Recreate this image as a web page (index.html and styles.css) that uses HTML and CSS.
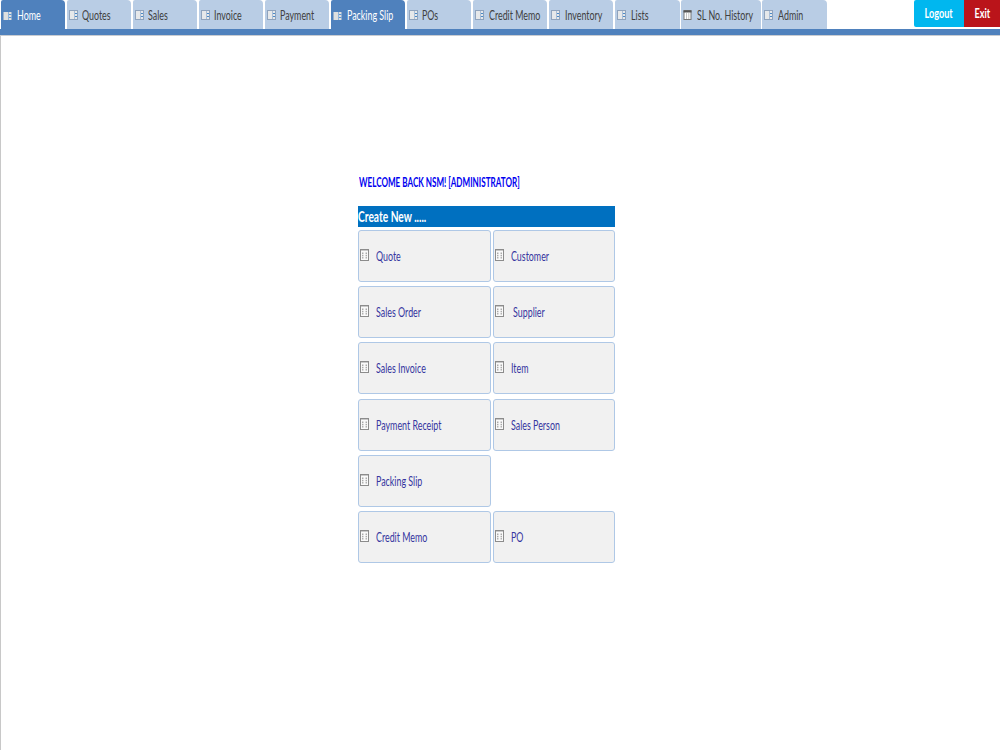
FILE: index.html
```
<!DOCTYPE html>
<html lang="en">
<head>
<meta charset="utf-8">
<title>Home</title>
<link rel="stylesheet" href="styles.css">
</head>
<body>
<svg class="defs" width="0" height="0">
  <symbol id="form" viewBox="0 0 9 10">
    <rect x=".5" y=".5" width="8" height="9" fill="#e6e8ea" stroke="#8fa3bd"/>
    <path d="M5.500 1v8" stroke="#a9bdd6"/>
    <path d="M6 3.500h2M6 6.500h2" stroke="#4a8ac8"/>
  </symbol>
  <symbol id="form-active" viewBox="0 0 9 10">
    <rect x=".5" y="1" width="8" height="8" fill="#dedfdf"/>
    <path d="M5.500 1v8" stroke="#8fb2da"/>
    <path d="M6 3.500h2.500M6 6.500h2.500" stroke="#5b96d4"/>
  </symbol>
  <symbol id="table" viewBox="0 0 9 10">
    <rect x="1" y=".5" width="7" height="9" fill="#fff" stroke="#777"/>
    <path d="M.5 1.500h8" stroke="#555" stroke-width="2"/>
    <path d="M3.500 3v6M5.800 3v6" stroke="#aaa" stroke-width=".7"/>
  </symbol>
  <symbol id="sheet" viewBox="0 0 9 12">
    <rect x=".5" y=".5" width="8" height="11" fill="#fafafa" stroke="#8c8c8c"/>
    <path d="M1 1.500h7" stroke="#c9c9c9"/>
    <path d="M2.500 3.500v6M6.500 3.500v6" stroke="#aaa" stroke-dasharray="1.500 .8"/>
    <path d="M3.500 3.500v6M5.500 3.500v6" stroke="#d6d6d6" stroke-dasharray="1.500 .8"/>
  </symbol>
</svg>
<header class="topbar">
  <nav class="tabs">
    <a class="tab home active"><svg class="ico"><use href="#form-active"/></svg><span class="label">Home</span></a>
    <a class="tab"><svg class="ico"><use href="#form"/></svg><span class="label">Quotes</span></a>
    <a class="tab"><svg class="ico"><use href="#form"/></svg><span class="label">Sales</span></a>
    <a class="tab"><svg class="ico"><use href="#form"/></svg><span class="label">Invoice</span></a>
    <a class="tab"><svg class="ico"><use href="#form"/></svg><span class="label">Payment</span></a>
    <a class="tab wide active"><svg class="ico"><use href="#form-active"/></svg><span class="label">Packing Slip</span></a>
    <a class="tab"><svg class="ico"><use href="#form"/></svg><span class="label">POs</span></a>
    <a class="tab wide"><svg class="ico"><use href="#form"/></svg><span class="label">Credit Memo</span></a>
    <a class="tab"><svg class="ico"><use href="#form"/></svg><span class="label">Inventory</span></a>
    <a class="tab"><svg class="ico"><use href="#form"/></svg><span class="label">Lists</span></a>
    <a class="tab wider"><svg class="ico"><use href="#table"/></svg><span class="label">SL No. History</span></a>
    <a class="tab"><svg class="ico"><use href="#form"/></svg><span class="label">Admin</span></a>
  </nav>
  <div class="session">
    <a class="logout"><span>Logout</span></a>
    <a class="exit"><span>Exit</span></a>
  </div>
</header>
<main class="page">
  <section class="panel">
    <h1 class="welcome"><span>WELCOME BACK NSM! [ADMINISTRATOR]</span></h1>
    <h2 class="title"><span>Create New .....</span></h2>
    <div class="grid">
      <a class="btn"><svg class="sheet"><use href="#sheet"/></svg><span class="label">Quote</span></a>
      <a class="btn"><svg class="sheet"><use href="#sheet"/></svg><span class="label">Customer</span></a>
      <a class="btn"><svg class="sheet"><use href="#sheet"/></svg><span class="label">Sales Order</span></a>
      <a class="btn supplier"><svg class="sheet"><use href="#sheet"/></svg><span class="label">Supplier</span></a>
      <a class="btn"><svg class="sheet"><use href="#sheet"/></svg><span class="label">Sales Invoice</span></a>
      <a class="btn"><svg class="sheet"><use href="#sheet"/></svg><span class="label">Item</span></a>
      <a class="btn"><svg class="sheet"><use href="#sheet"/></svg><span class="label">Payment Receipt</span></a>
      <a class="btn"><svg class="sheet"><use href="#sheet"/></svg><span class="label">Sales Person</span></a>
      <a class="btn"><svg class="sheet"><use href="#sheet"/></svg><span class="label">Packing Slip</span></a>
      <a class="btn first"><svg class="sheet"><use href="#sheet"/></svg><span class="label">Credit Memo</span></a>
      <a class="btn"><svg class="sheet"><use href="#sheet"/></svg><span class="label">PO</span></a>
    </div>
  </section>
</main>
</body>
</html>
```
FILE: styles.css
```
* { box-sizing: border-box; }
body {
  margin: 0;
  height: 750px;
  overflow: hidden;
  display: flex;
  flex-direction: column;
  background: #fff;
  font-family: Lato, "Liberation Sans", sans-serif;
  font-size: 12px;
}
.defs { position: absolute; }
span {
  display: block;
  flex: none;
  white-space: nowrap;
  transform: scale(.74, 1.15);
  transform-origin: 0 50%;
}
.topbar {
  flex: none;
  height: 35px;
  display: flex;
  justify-content: space-between;
  border-bottom: 6px solid #4f81bd;
  box-shadow: 0 1px 0 #c9ccd1;
}
.tabs { display: flex; gap: 1.700px; padding-left: 1px; }
.tab {
  width: 64.400px;
  height: 29px;
  display: flex;
  align-items: center;
  padding: 1px 0 0 2px;
  background: #b9cde5;
  border-radius: 2px 4px 0 0;
  color: #404040;
}
.tab.home { width: 64px; }
.tab.wide { width: 74.300px; }
.tab.wider { width: 79.400px; }
.tab.active { height: 30px; background: #4f81bd; color: #fff; }
.tab .label { margin-bottom: 2px; }
.ico { flex: none; width: 9px; height: 10px; margin-right: 4.500px; }
.session { display: flex; }
.session a {
  height: 27px;
  display: flex;
  align-items: center;
  justify-content: center;
  color: #fff;
  font-weight: 700;
  padding-bottom: 3px;
}
.session span { transform: scale(.76, 1.150); transform-origin: 50% 50%; }
.logout { width: 50px; background: #00b7ef; border-radius: 2px 0 0 2px; }
.exit { width: 36px; background: #ba141a; }
.page {
  flex: 1;
  margin-top: 1px;
  border-left: 1px solid #c8c8c8;
  padding: 138px 0 0 357px;
}
.panel { width: 257px; }
.welcome {
  margin: 0;
  height: 32px;
  padding-left: 1px;
  font-size: 11.500px;
  line-height: 15px;
  color: #0000f0;
}
.welcome span { transform: scale(.704, 1.150); }
.title {
  margin: 0 0 3px;
  height: 21px;
  background: #0070c0;
  color: #fff;
  font-size: 13px;
  line-height: 21px;
}
.title span { transform: scale(.785, 1.120); }
.grid {
  display: grid;
  grid-template-columns: 133px 122px;
  grid-auto-rows: 52px;
  gap: 4.200px 2px;
}
.btn {
  display: flex;
  align-items: center;
  padding-left: 1px;
  background: #f1f1f1;
  border: 1px solid #afc8e6;
  border-radius: 3px;
  color: #3535a0;
}
.btn.first { grid-column: 1; }
.btn .label { margin-bottom: 1px; }
.sheet { flex: none; width: 9px; height: 12px; margin: 0 6.500px 2px 0; }
.supplier .sheet { margin-right: 8.500px; }
```
